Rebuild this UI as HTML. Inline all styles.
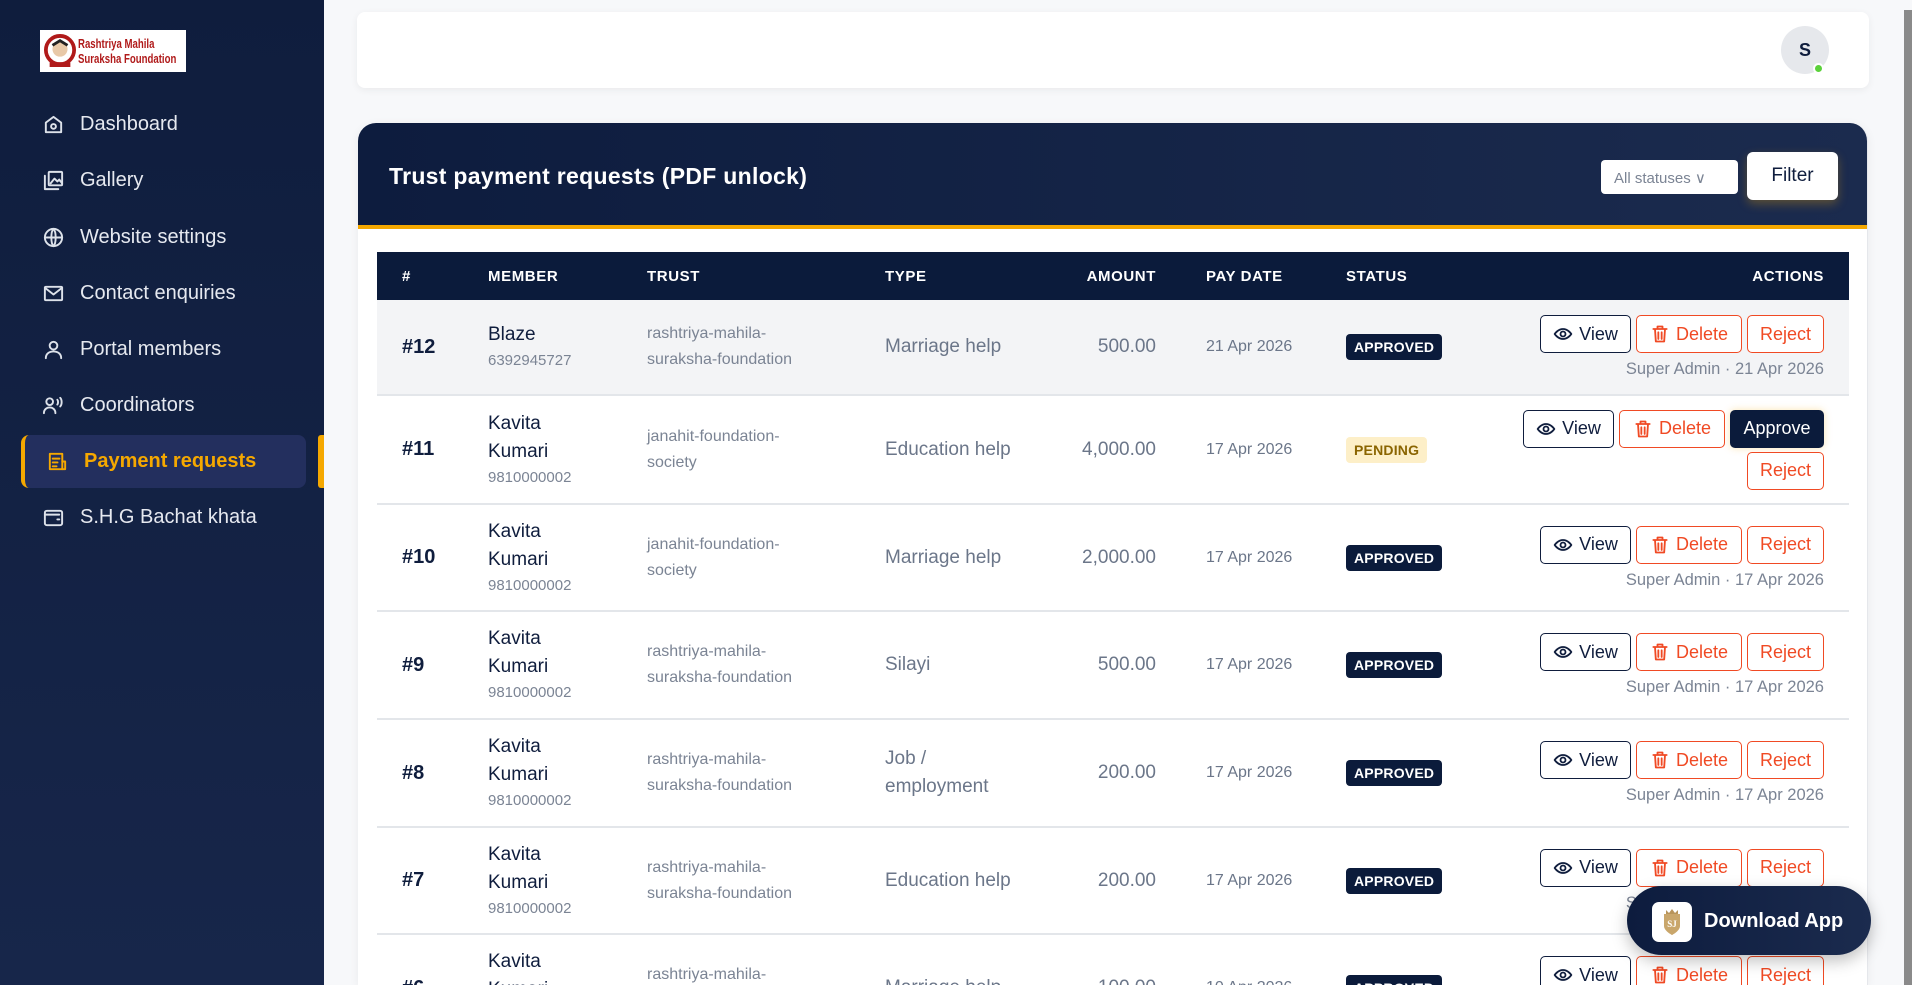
<!DOCTYPE html>
<html><head><meta charset="utf-8">
<style>
*{box-sizing:border-box;margin:0;padding:0}
html,body{width:1912px;height:985px;overflow:hidden}
body{font-family:"Liberation Sans",sans-serif;background:#f7f8fa;position:relative;color:#0f1d3d}
.side{position:absolute;left:0;top:0;width:324px;height:985px;background:linear-gradient(180deg,#0f1d3d 0%,#17264a 100%)}
.logo{position:absolute;left:40px;top:30px;width:146px;height:42px;background:#fff;display:flex;align-items:center;padding-left:4px;overflow:hidden}
.logo svg{flex-shrink:0}
.logo .t{color:#b01a1a;font-weight:bold;font-size:13px;line-height:15px;margin-left:2px;transform:scaleX(.74);transform-origin:left center;white-space:nowrap}
.nav{position:absolute;left:42px;display:flex;align-items:center;color:#e6e9f0;font-size:20px;height:30px}
.nav svg{width:23px;height:23px;margin-right:15px;stroke:#dde2ea;fill:none;stroke-width:2;stroke-linecap:round;stroke-linejoin:round}
.active{position:absolute;left:21px;top:435px;width:285px;height:53px;background:#232f5e;border-left:4px solid #f5a800;border-radius:8px}
.abar{position:absolute;left:318px;top:435px;width:6px;height:53px;background:#f5a800;border-radius:3px 0 0 3px}
.topcard{position:absolute;left:357px;top:12px;width:1512px;height:76px;background:#fff;border-radius:8px;box-shadow:0 2px 8px rgba(0,0,0,.06)}
.avatar{position:absolute;left:1781px;top:26px;width:48px;height:48px;border-radius:50%;background:#e6e8ec;font-weight:bold;font-size:18px;display:flex;align-items:center;justify-content:center;color:#0f1d3d}
.dot{position:absolute;left:1813px;top:63px;width:11px;height:11px;border-radius:50%;background:#5bd13b;border:2px solid #fff}
.card{position:absolute;left:358px;top:123px;width:1510px;height:862px;background:#fff;border-radius:18px 18px 0 0;box-shadow:0 2px 10px rgba(0,0,0,.06);overflow:hidden;border-right:1px solid #e5e7eb}
.chead{height:106px;background:linear-gradient(90deg,#0d1c3e,#1b2b4e);border-bottom:4px solid #f5a800;position:relative}
.chead h1{position:absolute;left:31px;top:40px;color:#fff;font-size:23px;font-weight:bold;letter-spacing:.3px}
.sel{position:absolute;left:1243px;top:37px;width:137px;height:34px;background:#fff;border-radius:4px;font-size:15px;color:#7b8494;padding:9px 0 0 13px}
.filt{position:absolute;left:1389px;top:29px;width:91px;height:48px;background:#fff;border-radius:6px;font-size:19px;color:#0f1d3d;text-align:center;line-height:48px;box-shadow:0 4px 10px rgba(245,168,0,.3)}
table{position:absolute;left:19px;top:129px;width:1472px;border-collapse:collapse;table-layout:fixed}
th{background:#0b1b3b;color:#fff;font-size:15px;font-weight:bold;letter-spacing:.6px;height:48px;text-align:left}
td{border-bottom:2px solid #e3e6ea;vertical-align:middle;font-size:19px;color:#6b7689}
tr.g td{background:#f3f4f6}
.id{padding-left:25px;color:#0f1d3d;font-weight:bold;font-size:20px}
.nm{color:#0f1d3d;line-height:28px}
.ph{font-size:15px;color:#7b8494;line-height:24px}
.tr{font-size:16px;line-height:26px;color:#7b8494}
.amt{text-align:right;padding-right:0}
.dt{font-size:16px;padding-left:50px;color:#6b7689}
.b{display:inline-block;background:#0b1b3b;color:#fff;font-size:14px;font-weight:bold;padding:5px 8px;border-radius:4px;letter-spacing:.2px}
.p{background:#fdefc8;color:#8a6400}
.act{text-align:right;padding-right:25px}
.btns{display:flex;justify-content:flex-end;flex-wrap:wrap;gap:4px 5px;margin-left:auto;width:310px}
.bt{height:38px;border-radius:5px;font-size:18px;display:inline-flex;align-items:center;justify-content:center;background:#fff}
.v{width:91px;border:1.5px solid #0f1d3d;color:#0f1d3d}
.d{width:106px;border:1.5px solid #f04a24;color:#f04a24}
.r{width:77px;border:1.5px solid #f04a24;color:#f04a24}
.ap{width:94px;background:#0b1b3b;color:#fff;box-shadow:0 0 8px rgba(245,168,0,.3)}
.bt svg{width:20px;height:20px;margin-right:6px;fill:none;stroke:currentColor;stroke-width:2.2;stroke-linecap:round;stroke-linejoin:round}
.sub{font-size:16.5px;color:#7b8494;margin-top:7px}
.dl{position:absolute;left:1627px;top:886px;width:244px;height:69px;border-radius:35px;background:linear-gradient(90deg,#0d1c3e,#1b2b4e);box-shadow:0 6px 16px rgba(0,0,0,.25);color:#fff;font-weight:bold;font-size:20px}
.dl .ic{position:absolute;left:25px;top:16px;width:40px;height:40px;border-radius:7px;background:#fff}
.dl span{position:absolute;left:77px;top:24px}
.sb{position:absolute;left:1904px;top:10px;width:8px;height:975px;background:#8a8a8a}
</style></head><body>
<div class="side">
 <div class="logo"><svg width="32" height="36" viewBox="0 0 34 36"><circle cx="17" cy="17" r="15" fill="#fff" stroke="#b01a1a" stroke-width="4"/><circle cx="17" cy="16" r="8" fill="#e8c9a8"/><path d="M9 12 L17 7 L25 12" stroke="#222" stroke-width="3" fill="none"/><rect x="6" y="30" width="22" height="5" fill="#b01a1a"/></svg><div class="t">Rashtriya Mahila<br>Suraksha Foundation</div></div>
 <div class="nav" style="top:109px"><svg viewBox="0 0 24 24"><path d="M4 10l8-6 8 6v10H4z"/><circle cx="12" cy="14" r="2.5"/></svg>Dashboard</div>
 <div class="nav" style="top:165px"><svg viewBox="0 0 24 24"><rect x="7" y="3" width="14" height="14" rx="1"/><path d="M3 7v14h14"/><path d="M9 15l4-5 3 3 2-2 3 4"/></svg>Gallery</div>
 <div class="nav" style="top:222px"><svg viewBox="0 0 24 24"><circle cx="12" cy="12" r="9"/><path d="M3 12h18M12 3c3 3 3 15 0 18M12 3c-3 3-3 15 0 18"/></svg>Website settings</div>
 <div class="nav" style="top:278px"><svg viewBox="0 0 24 24"><rect x="3" y="5" width="18" height="14" rx="1"/><path d="M3 6l9 7 9-7"/></svg>Contact enquiries</div>
 <div class="nav" style="top:334px"><svg viewBox="0 0 24 24"><circle cx="12" cy="8" r="4"/><path d="M4 21c0-5 4-7 8-7s8 2 8 7"/></svg>Portal members</div>
 <div class="nav" style="top:390px"><svg viewBox="0 0 24 24"><circle cx="8" cy="8" r="3.5"/><path d="M2 20c0-4 3-6 6-6s6 2 6 6M16 6c1 1 1 4 0 5M19 4c2 2 2 7 0 9"/></svg>Coordinators</div>
 <div class="active"></div><div class="abar"></div>
 <div class="nav" style="top:446px;left:46px;color:#f5a800;font-weight:bold"><svg viewBox="0 0 24 24" style="stroke:#f5a800"><path d="M4 4h13v16H4z"/><path d="M17 12h3v8h-3M7 9h7M7 13h5M7 17h4"/></svg>Payment requests</div>
 <div class="nav" style="top:502px"><svg viewBox="0 0 24 24"><rect x="3" y="5" width="18" height="15" rx="2"/><path d="M3 9h15M16 14h2"/></svg>S.H.G Bachat khata</div>
</div>
<div class="topcard"></div>
<div class="avatar">S</div><div class="dot"></div>
<div class="card">
 <div class="chead"><h1>Trust payment requests (PDF unlock)</h1><div class="sel">All statuses ∨</div><div class="filt">Filter</div></div>
 <table>
 <colgroup><col style="width:111px"><col style="width:159px"><col style="width:238px"><col style="width:165px"><col style="width:106px"><col style="width:190px"><col style="width:134px"><col style="width:369px"></colgroup>
 <tr><th style="padding-left:25px">#</th><th>MEMBER</th><th>TRUST</th><th>TYPE</th><th style="text-align:right">AMOUNT</th><th style="padding-left:50px">PAY DATE</th><th>STATUS</th><th style="text-align:right;padding-right:25px">ACTIONS</th></tr>
 <tr class="g" style="height:95px"><td class="id">#12</td><td><div class="nm">Blaze</div><div class="ph">6392945727</div></td><td class="tr">rashtriya-mahila-<br>suraksha-foundation</td><td>Marriage help</td><td class="amt">500.00</td><td class="dt">21 Apr 2026</td><td><span class="b">APPROVED</span></td><td class="act"><div class="btns"><span class="bt v"><svg viewBox="0 0 24 24"><path d="M2 12s4-6 10-6 10 6 10 6-4 6-10 6S2 12 2 12z"/><circle cx="12" cy="12" r="3"/></svg>View</span><span class="bt d"><svg viewBox="0 0 24 24"><path d="M4 6h16M9 6V3h6v3M6 6l1 15h10l1-15M10 10v8M14 10v8"/></svg>Delete</span><span class="bt r">Reject</span></div><div class="sub">Super Admin · 21 Apr 2026</div></td></tr>
 <tr style="height:109px"><td class="id">#11</td><td><div class="nm">Kavita<br>Kumari</div><div class="ph">9810000002</div></td><td class="tr">janahit-foundation-<br>society</td><td>Education help</td><td class="amt">4,000.00</td><td class="dt">17 Apr 2026</td><td><span class="b p">PENDING</span></td><td class="act"><div class="btns" style="width:305px"><span class="bt v"><svg viewBox="0 0 24 24"><path d="M2 12s4-6 10-6 10 6 10 6-4 6-10 6S2 12 2 12z"/><circle cx="12" cy="12" r="3"/></svg>View</span><span class="bt d"><svg viewBox="0 0 24 24"><path d="M4 6h16M9 6V3h6v3M6 6l1 15h10l1-15M10 10v8M14 10v8"/></svg>Delete</span><span class="bt ap">Approve</span><span class="bt r">Reject</span></div></td></tr>
 <tr style="height:107px"><td class="id">#10</td><td><div class="nm">Kavita<br>Kumari</div><div class="ph">9810000002</div></td><td class="tr">janahit-foundation-<br>society</td><td>Marriage help</td><td class="amt">2,000.00</td><td class="dt">17 Apr 2026</td><td><span class="b">APPROVED</span></td><td class="act"><div class="btns"><span class="bt v"><svg viewBox="0 0 24 24"><path d="M2 12s4-6 10-6 10 6 10 6-4 6-10 6S2 12 2 12z"/><circle cx="12" cy="12" r="3"/></svg>View</span><span class="bt d"><svg viewBox="0 0 24 24"><path d="M4 6h16M9 6V3h6v3M6 6l1 15h10l1-15M10 10v8M14 10v8"/></svg>Delete</span><span class="bt r">Reject</span></div><div class="sub">Super Admin · 17 Apr 2026</div></td></tr>
 <tr style="height:108px"><td class="id">#9</td><td><div class="nm">Kavita<br>Kumari</div><div class="ph">9810000002</div></td><td class="tr">rashtriya-mahila-<br>suraksha-foundation</td><td>Silayi</td><td class="amt">500.00</td><td class="dt">17 Apr 2026</td><td><span class="b">APPROVED</span></td><td class="act"><div class="btns"><span class="bt v"><svg viewBox="0 0 24 24"><path d="M2 12s4-6 10-6 10 6 10 6-4 6-10 6S2 12 2 12z"/><circle cx="12" cy="12" r="3"/></svg>View</span><span class="bt d"><svg viewBox="0 0 24 24"><path d="M4 6h16M9 6V3h6v3M6 6l1 15h10l1-15M10 10v8M14 10v8"/></svg>Delete</span><span class="bt r">Reject</span></div><div class="sub">Super Admin · 17 Apr 2026</div></td></tr>
 <tr style="height:108px"><td class="id">#8</td><td><div class="nm">Kavita<br>Kumari</div><div class="ph">9810000002</div></td><td class="tr">rashtriya-mahila-<br>suraksha-foundation</td><td style="line-height:28px">Job /<br>employment</td><td class="amt">200.00</td><td class="dt">17 Apr 2026</td><td><span class="b">APPROVED</span></td><td class="act"><div class="btns"><span class="bt v"><svg viewBox="0 0 24 24"><path d="M2 12s4-6 10-6 10 6 10 6-4 6-10 6S2 12 2 12z"/><circle cx="12" cy="12" r="3"/></svg>View</span><span class="bt d"><svg viewBox="0 0 24 24"><path d="M4 6h16M9 6V3h6v3M6 6l1 15h10l1-15M10 10v8M14 10v8"/></svg>Delete</span><span class="bt r">Reject</span></div><div class="sub">Super Admin · 17 Apr 2026</div></td></tr>
 <tr style="height:107px"><td class="id">#7</td><td><div class="nm">Kavita<br>Kumari</div><div class="ph">9810000002</div></td><td class="tr">rashtriya-mahila-<br>suraksha-foundation</td><td>Education help</td><td class="amt">200.00</td><td class="dt">17 Apr 2026</td><td><span class="b">APPROVED</span></td><td class="act"><div class="btns"><span class="bt v"><svg viewBox="0 0 24 24"><path d="M2 12s4-6 10-6 10 6 10 6-4 6-10 6S2 12 2 12z"/><circle cx="12" cy="12" r="3"/></svg>View</span><span class="bt d"><svg viewBox="0 0 24 24"><path d="M4 6h16M9 6V3h6v3M6 6l1 15h10l1-15M10 10v8M14 10v8"/></svg>Delete</span><span class="bt r">Reject</span></div><div class="sub">Super Admin · 17 Apr 2026</div></td></tr>
 <tr style="height:108px"><td class="id">#6</td><td><div class="nm">Kavita<br>Kumari</div><div class="ph">9810000002</div></td><td class="tr">rashtriya-mahila-<br>suraksha-foundation</td><td>Marriage help</td><td class="amt">100.00</td><td class="dt">10 Apr 2026</td><td><span class="b">APPROVED</span></td><td class="act"><div class="btns"><span class="bt v"><svg viewBox="0 0 24 24"><path d="M2 12s4-6 10-6 10 6 10 6-4 6-10 6S2 12 2 12z"/><circle cx="12" cy="12" r="3"/></svg>View</span><span class="bt d"><svg viewBox="0 0 24 24"><path d="M4 6h16M9 6V3h6v3M6 6l1 15h10l1-15M10 10v8M14 10v8"/></svg>Delete</span><span class="bt r">Reject</span></div><div class="sub">Super Admin · 10 Apr 2026</div></td></tr>
 </table>
</div>
<div class="dl"><div class="ic"><svg width="40" height="40" viewBox="0 0 40 40"><path d="M12 12h16v12c0 5-8 9-8 9s-8-4-8-9z" fill="#c9a66b"/><path d="M14 8l3 3 3-4 3 4 3-3v4H14z" fill="#b8945a"/><text x="20" y="25" font-size="9" fill="#fff" text-anchor="middle" font-family="Liberation Serif">SJ</text></svg></div><span>Download App</span></div>
<div class="sb"></div>
</body></html>
